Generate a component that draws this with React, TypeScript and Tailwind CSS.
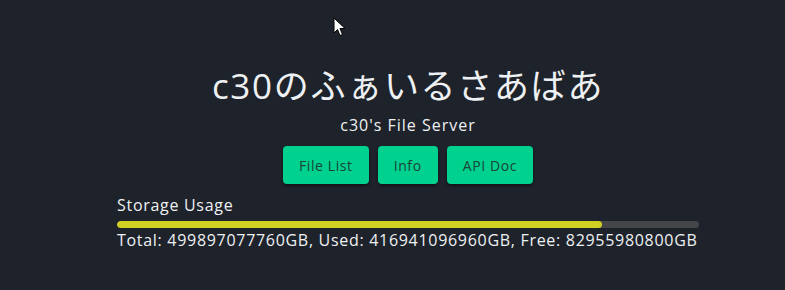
import { useState } from 'react'

const FONT = '[font-family:"Open_Sans","Noto_Sans_CJK_JP",sans-serif]'

export default function App() {
  const [total] = useState(499897077760)
  const [used] = useState(416941096960)
  const free = total - used
  const pct = (used / total) * 100

  return (
    <div className={`relative h-[290px] w-[785px] bg-[#1e222a] text-[#eef1f3] ${FONT}`}>
      {/* Cursor */}
      <svg className="absolute left-[333px] top-[17px]" width="13" height="20" viewBox="0 0 13 20">
        <path d="M1 1 L1 16 L4.5 12.5 L7 18.5 L9.5 17.5 L7 11.5 L12 11.5 Z" fill="#fff" stroke="#000" strokeWidth="1" />
      </svg>

      <div className="ml-[117px] flex w-[582px] flex-col items-center pt-[62px]">
        <h1 className="text-[35px] leading-[48px] tracking-[1.7px]">c30のふぁいるさあばあ</h1>
        <p className="mt-[4px] text-[16px] leading-[22px] tracking-[1px]">c30's File Server</p>

        {/* Nav */}
        <div className="mt-[10px] flex gap-[9px]">
          {['File List', 'Info', 'API Doc'].map((label) => (
            <button
              key={label}
              className="h-[38px] rounded-[4px] bg-[#00d18f] px-[16px] text-[14px] tracking-[0.6px] text-[#1a4436] shadow-[0_2px_3px_rgba(0,0,0,0.45)]"
            >
              {label}
            </button>
          ))}
        </div>

        {/* Storage */}
        <div className="mt-[11px] w-full tracking-[0.7px]">
          <div className="text-[16px] leading-[20px]">Storage Usage</div>
          <div className="mt-[6px] h-[7px] w-full overflow-hidden rounded-full bg-[#454648]">
            <div className="h-full rounded-full bg-[#cfd021]" style={{ width: `${pct}%` }} />
          </div>
          <div className="mt-[2px] text-[16px] leading-[20px]">
            Total: {total}GB, Used: {used}GB, Free: {free}GB
          </div>
        </div>
      </div>
    </div>
  )
}
